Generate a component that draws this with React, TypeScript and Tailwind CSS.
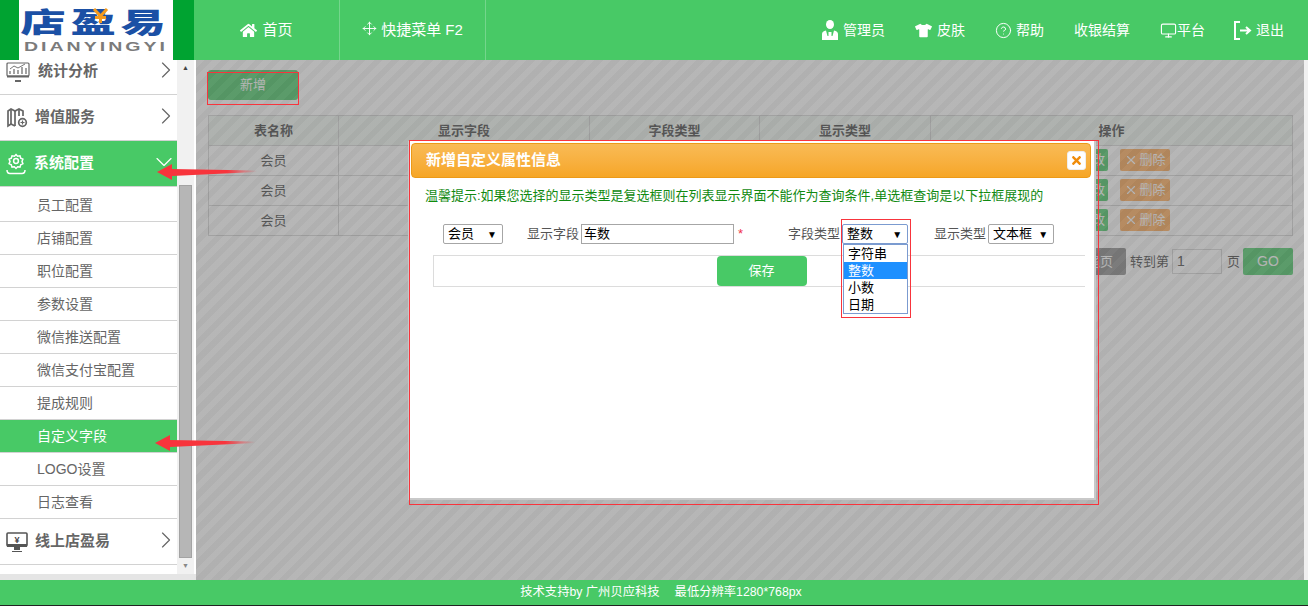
import { ChevronDown, ChevronRight, CircleHelp, Monitor, Move, X } from 'lucide-react';
import { FaHome, FaTimes, FaTshirt } from 'react-icons/fa';

const subMenus = ['员工配置', '店铺配置', '职位配置', '参数设置', '微信推送配置', '微信支付宝配置', '提成规则', '自定义字段', 'LOGO设置', '日志查看'];

function ChartIcon() {
  return (
    <svg width="24" height="22" viewBox="0 0 24 22" fill="none" stroke="#666" strokeWidth="1.2">
      <rect x="1" y="2" width="22" height="13" rx="1" />
      <path d="M1 15.5h22" strokeWidth="2" />
      <path d="M4 13v-3M8 13V8M12 13V9M16 13V6M20 13V7" />
      <path d="M4 8l4-3 4 2 7-4" strokeWidth="0.9" />
      <path d="M9 20h6" strokeWidth="2" />
    </svg>
  );
}

function MapPlusIcon() {
  return (
    <svg width="22" height="22" viewBox="0 0 22 22" fill="none" stroke="#666" strokeWidth="1.7">
      <path d="M9 19l-4-2-3 2V4l3-2 4 2 4-2 4 2v5" />
      <path d="M5 2v15M9 4v15M13 2v7" />
      <circle cx="16.5" cy="15.5" r="3.8" fill="#fff" />
      <path d="M16.5 13.5v4M14.5 15.5h4" strokeWidth="1.2" />
    </svg>
  );
}

function GearIcon() {
  return (
    <svg width="20" height="22" viewBox="0 0 20 22" fill="none" stroke="#fff" strokeWidth="1.5">
      <circle cx="10" cy="8" r="2.4" />
      <path d="M10 1.5l1.6 1.7 2.4-.4.7 2.3 2.2 1.1-.9 2.3.9 2.2-2.2 1.1-.7 2.3-2.4-.4L10 15.4l-1.6-1.7-2.4.4-.7-2.3L3.100 10.700l.9-2.200-.9-2.300L5.300 5.100l.7-2.300 2.400.4z" />
      <path d="M1 17c0 2.500 1 3.500 3 3.500h12c2 0 3-1 3-3.500" />
    </svg>
  );
}

function YenIcon() {
  return (
    <svg width="22" height="20" viewBox="0 0 22 20">
      <rect x="1" y="1" width="20" height="13" rx="1" fill="#fff" stroke="#555" strokeWidth="1.6" />
      <path d="M1 12h20v3H1z" fill="#555" />
      <path d="M8 18h6v-3H8zM6 19h10v1H6z" fill="#555" />
      <text x="11" y="10.500" fontSize="9" fontWeight="700" textAnchor="middle" fill="#444">¥</text>
    </svg>
  );
}

function AdminIcon() {
  return (
    <svg width="16" height="20" viewBox="0 0 16 20" fill="#fff">
      <ellipse cx="8" cy="4.500" rx="4" ry="4.500" />
      <path d="M0 14c0-2 1.500-3 4-3.500L5.500 16h1V12h3v4h1L12 10.500c2.500.5 4 1.500 4 3.500v6H0z" />
    </svg>
  );
}

function ExitIcon() {
  return (
    <svg width="18" height="19" viewBox="0 0 18 19" fill="none" stroke="#fff" strokeWidth="2">
      <path d="M6 1H1v17h5" />
      <path d="M6 9.500h10M12 6l4 3.500-4 3.500" />
    </svg>
  );
}

function RedArrow({ id }: { id: string }) {
  return (
    <svg width="100" height="18" viewBox="0 0 100 18">
      <defs>
        <linearGradient id={id} x1="0" x2="1" y1="0" y2="0">
          <stop offset="0" stopColor="#f8343c" />
          <stop offset="0.7" stopColor="#f8343c" />
          <stop offset="1" stopColor="#f8343c" stopOpacity="0" />
        </linearGradient>
      </defs>
      <path d="M0 9L15 1l0 5 85 1.500v1.500L15 13l0 4z" fill={`url(#${id})`} />
    </svg>
  );
}

function FakeSelect({ label, width, focused }: { label: string; width: string; focused?: boolean }) {
  return (
    <div className={`flex h-[20px] items-center justify-between rounded-[2px] border bg-white pl-[4px] pr-[5px] text-[13px] text-black ${width} ${focused ? 'border-[#7b9bd0]' : 'border-[#a6a6a6]'}`}>
      <span>{label}</span>
      <span className="text-[10px]">▼</span>
    </div>
  );
}

function Sidebar() {
  return (
    <aside className="flex w-[196px] shrink-0 flex-col bg-[#e5e5e5]">
      <div className="flex h-[514px] overflow-hidden">
        <div className="flex w-[177px] flex-col bg-white">
          <div className="-mt-[11px] flex h-[46px] shrink-0 items-center border-b border-[#d2d2d2] pl-[6px] pr-[7px] text-[15px] font-bold text-[#666]">
            <ChartIcon />
            <span className="ml-[8px] flex-1">统计分析</span>
            <ChevronRight size={28} strokeWidth={1} className="-mr-[10px] -mt-1" />
          </div>
          <div className="flex h-[46px] shrink-0 items-center border-b border-[#d2d2d2] pl-[6px] pr-[7px] text-[15px] font-bold text-[#666]">
            <MapPlusIcon />
            <span className="ml-[7px] flex-1">增值服务</span>
            <ChevronRight size={28} strokeWidth={1} className="-mr-[10px] -mt-1" />
          </div>
          <div className="flex h-[46px] shrink-0 items-center border-b border-[#d2d2d2] bg-[#48c966] pl-[6px] pr-[5px] text-[15px] font-bold text-white">
            <GearIcon />
            <span className="ml-[8px] flex-1">系统配置</span>
            <ChevronDown size={28} strokeWidth={1} className="-mr-[6px] -mt-1" />
          </div>
          <div className="mt-[2px] flex flex-col">
            {subMenus.map(name => (
              <div
                key={name}
                className={`flex h-[33px] items-center border-b border-[#d2d2d2] pl-[37px] text-[14px] ${name === '自定义字段' ? 'bg-[#48c966] text-white' : 'text-[#666]'}`}
              >
                {name}
              </div>
            ))}
          </div>
          <div className="flex h-[46px] shrink-0 items-center border-b border-[#d2d2d2] pl-[6px] pr-[7px] text-[15px] font-bold text-[#666]">
            <YenIcon />
            <span className="ml-[7px] flex-1">线上店盈易</span>
            <ChevronRight size={28} strokeWidth={1} className="-mr-[10px] -mt-1" />
          </div>
        </div>
        {/* scrollbar */}
        <div className="flex w-[17px] flex-col items-center bg-[#f1f1f1] pt-[5px]">
          <span className="h-[12px] text-[7px] leading-[6px] text-[#444]">▲</span>
          <div className="mt-[108px] h-[373px] w-[13px] border border-[#a3a3a3] bg-[#b6b6b6]" />
          <span className="mt-[4px] text-[7px] leading-[8px] text-[#888]">▼</span>
        </div>
        <div className="w-[2px] bg-white" />
      </div>
    </aside>
  );
}

function Main() {
  return (
    <main className="relative min-w-0 flex-1 bg-white px-[12px] pt-[10px] text-[13px] text-[#444]">
      <button className="h-[30px] w-[90px] rounded-[3px] bg-[#48c966] text-[13px] text-white">新增</button>
      <table className="mt-[15px] w-[1085px] table-fixed border-collapse text-center">
        <thead>
          <tr className="h-[30px] bg-[#f0f7f1] font-bold">
            <th className="w-[130px] border border-[#d4d4d4]">表名称</th>
            <th className="w-[251px] border border-[#d4d4d4]">显示字段</th>
            <th className="w-[170px] border border-[#d4d4d4]">字段类型</th>
            <th className="w-[171px] border border-[#d4d4d4]">显示类型</th>
            <th className="border border-[#d4d4d4]">操作</th>
          </tr>
        </thead>
        <tbody>
          {[1, 2, 3].map(row => (
            <tr key={row} className="h-[30px]">
              <td className="border border-[#d4d4d4]">会员</td>
              {/* these three cells sit behind the dialog */}
              <td className="border border-[#d4d4d4]" />
              <td className="border border-[#d4d4d4]" />
              <td className="border border-[#d4d4d4]" />
              <td className="border border-[#d4d4d4]">
                <div className="-mt-[1px] flex gap-[12px] pl-[129px] text-white">
                  <span className="flex h-[22px] w-[48px] items-center justify-end rounded-[2px] bg-[#48c966] pr-[3px]">修改</span>
                  <span className="flex h-[22px] w-[50px] items-center justify-center gap-px rounded-[2px] bg-[#ffa955]">
                    <X size={14} />
                    删除
                  </span>
                </div>
              </td>
            </tr>
          ))}
        </tbody>
      </table>
      <div className="mt-[12px] flex h-[27px] w-[1085px] items-center justify-end">
        <span className="flex h-[27px] w-[52px] items-center justify-center rounded-[2px] bg-[#898989] text-white">尾页</span>
        <span className="ml-[4px]">转到第</span>
        <span className="ml-[3px] flex h-[25px] w-[50px] items-center border border-[#d4d4d4] pl-[4px] text-[14px]">1</span>
        <span className="ml-[5px]">页</span>
        <span className="ml-[3px] flex h-[27px] w-[50px] items-center justify-center rounded-[2px] bg-[#48c966] text-[14px] text-white">GO</span>
      </div>
      {/* dimmed backdrop */}
      <div className="absolute inset-0 bg-[repeating-linear-gradient(135deg,rgba(110,110,110,0.5)_0,rgba(110,110,110,0.5)_6px,rgba(98,98,98,0.5)_6px,rgba(98,98,98,0.5)_12px)]" />
    </main>
  );
}

function Dialog() {
  return (
    <div className="absolute left-[408px] top-[141px] flex h-[359px] w-[687px] flex-col border-b-2 border-l border-r-[1px] border-[#c9c9c9] bg-white shadow-[1px_0_0_#c9c9c9]">
      <div className="ml-[2px] mr-[3px] mt-[2px] flex h-[35px] items-center justify-between rounded-[4px] border border-[#ec9a18] bg-gradient-to-b from-[#f9bb55] to-[#f6a625] pl-[14px] pr-[4px] text-[15px] font-bold text-white">
        <span>新增自定义属性信息</span>
        <span className="flex h-[19px] w-[19px] items-center justify-center rounded-[3px] border border-[#eee] bg-white text-[#f08c0a]">
          <FaTimes size={13} />
        </span>
      </div>
      <p className="ml-[16px] mt-[9px] text-[13px] leading-[18px] text-[#118a11]">
        温馨提示:如果您选择的显示类型是复选框则在列表显示界面不能作为查询条件,单选框查询是以下拉框展现的
      </p>
      <div className="relative ml-[34px] mt-[19px] flex h-[20px] items-center text-[13px] text-[#555]">
        <FakeSelect label="会员" width="w-[60px]" />
        <span className="ml-[24px]">显示字段</span>
        <span className="ml-[2px] flex h-[20px] w-[153px] items-center border border-[#a6a6a6] pl-[2px] text-black">车数</span>
        <span className="ml-[4px] text-[#f0304a]">*</span>
        <span className="ml-[45px]">字段类型</span>
        <div className="relative ml-[2px]">
          <FakeSelect label="整数" width="w-[66px]" focused />
          <div className="absolute left-[1px] top-[20px] z-10 w-[65px] border border-[#7b9bd0] bg-white text-black">
            {['字符串', '整数', '小数', '日期'].map(option => (
              <div key={option} className={`h-[17px] pl-[4px] leading-[17px] ${option === '整数' ? 'bg-[#1e90ff] text-white' : ''}`}>
                {option}
              </div>
            ))}
          </div>
        </div>
        <span className="ml-[26px]">显示类型</span>
        <span className="ml-[2px]">
          <FakeSelect label="文本框" width="w-[66px]" />
        </span>
      </div>
      <div className="ml-[24px] mt-[11px] flex h-[32px] w-[652px] items-center justify-center border-y border-l border-[#dcdcdc]">
        <button className="ml-[4px] h-[30px] w-[90px] rounded-[4px] bg-[#48c966] text-[13px] text-white">保存</button>
      </div>
    </div>
  );
}

export default function App() {
  return (
    <div className="relative flex h-[606px] w-[1308px] flex-col overflow-hidden bg-[#f0f0f0] font-['Liberation_Sans','Noto_Sans_CJK_SC',sans-serif]">
      <header className="flex h-[60px] shrink-0 items-center bg-[#48c966] text-[14px] text-white">
        <div className="flex h-full w-[194px] shrink-0 bg-[#00a331] pl-[19px]">
          <div className="flex h-[60px] w-[154px] flex-col items-center overflow-hidden bg-white">
            <span className="mt-[9px] h-[30px] whitespace-nowrap text-[28px] font-black leading-[30px] tracking-[3px] text-[#1b50a5] scale-x-[1.62]">店盈易</span>
            <span className="mt-[2px] whitespace-nowrap text-[13px] font-bold leading-[11px] tracking-[2px] text-[#7b7b7b] scale-x-[1.5]">DIANYINGYI</span>
          </div>
        </div>
        <div className="flex h-full w-[146px] items-center justify-center gap-[5px] border-r border-[#74d68c] text-[15px]">
          <FaHome size={17} />
          首页
        </div>
        <div className="flex h-full w-[146px] items-center justify-center gap-[4px] border-r border-[#74d68c] text-[15px]">
          <Move size={15} strokeWidth={1.5} className="-mt-[3px]" />
          快捷菜单 F2
        </div>
        <div className="ml-auto flex items-center gap-[30px] pr-[24px]">
          <span className="flex items-center gap-[5px]"><AdminIcon />管理员</span>
          <span className="flex items-center gap-[5px]"><FaTshirt size={17} />皮肤</span>
          <span className="flex items-center gap-[4px]"><CircleHelp size={17} strokeWidth={1.4} />帮助</span>
          <span>收银结算</span>
          <span className="flex items-center"><Monitor size={17} strokeWidth={1.6} />平台</span>
          <span className="-ml-[1px] flex items-center gap-[4px]"><ExitIcon />退出</span>
        </div>
      </header>

      <div className="flex min-h-0 flex-1">
        <Sidebar />
        <Main />
        <div className="w-[4px] shrink-0 bg-[#f0f0f0]" />
      </div>

      <footer className="flex h-[26px] shrink-0 items-start justify-center gap-[15px] border-b border-[#222] bg-[#48c966] pl-[14px] text-[12.3px] leading-[25px] text-white">
        <span>技术支持by 广州贝应科技</span>
        <span>最低分辨率1280*768px</span>
      </footer>

      <Dialog />

      {/* logo's yen mark, overlaps the middle glyph */}
      <svg className="absolute left-[92px] top-[8px]" width="17" height="15" viewBox="0 0 17 15" fill="none" stroke="#f39a1e" strokeWidth="3">
        <path d="M2 1l6.500 7L15 1M8.500 7v8M3 9.500h11" />
      </svg>

      {/* red annotations from the screenshot */}
      <div className="absolute left-[157px] top-[163px]"><RedArrow id="arrowTop" /></div>
      <div className="absolute left-[155px] top-[434px]"><RedArrow id="arrowBottom" /></div>
      <div className="pointer-events-none absolute left-[207px] top-[72px] h-[33px] w-[92px] border border-[#f8343c]" />
      <div className="pointer-events-none absolute left-[409px] top-[140px] h-[365px] w-[690px] border border-[#f8343c]" />
      <div className="pointer-events-none absolute left-[841px] top-[219px] z-20 h-[99px] w-[70px] border border-[#f8343c]" />
    </div>
  );
}
